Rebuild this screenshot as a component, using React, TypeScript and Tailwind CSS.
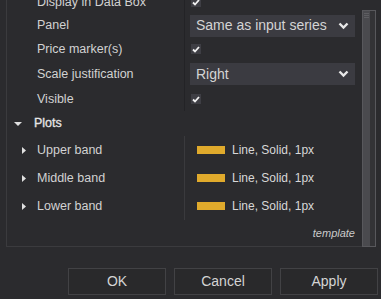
import { ReactNode } from "react";

function Check() {
  return (
    <div className="w-[10px] h-[10px] bg-[#3e3e44] flex items-center justify-center">
      <svg width="8" height="7" viewBox="0 0 8 7">
        <polyline points="1,3.5 3,5.5 7,1" fill="none" stroke="#f0f0f0" strokeWidth="1.8" />
      </svg>
    </div>
  );
}

function Select({ value }: { value: string }) {
  return (
    <div className="ml-[5px] w-[165px] h-[22px] bg-[#3b3b41] flex items-center justify-between pl-[6px] pr-[6px] text-[14px] text-[#d4d4d4]">
      <span>{value}</span>
      <svg width="11" height="8" viewBox="0 0 11 8">
        <polyline points="1.5,1.5 5.5,5.5 9.5,1.5" fill="none" stroke="#e8e8e8" strokeWidth="2.4" />
      </svg>
    </div>
  );
}

function Row({ label, h, children }: { label: string; h: string; children?: ReactNode }) {
  return (
    <div className={`flex ${h}`}>
      <div className="w-[178px] shrink-0 border-r border-[#232326] pl-[30px] flex items-center text-[12.5px] text-[#d2d2d2]">
        {label}
      </div>
      <div className="flex-1 flex items-center">{children}</div>
    </div>
  );
}

function PlotRow({ label }: { label: string }) {
  return (
    <div className="flex h-[28px]">
      <div className="w-[178px] shrink-0 border-r border-[#3a3a3d] flex items-center text-[12.5px] text-[#d2d2d2]">
        <svg width="4" height="7" viewBox="0 0 4 7" className="ml-[15px] mr-[11px]">
          <polygon points="0,0 4,3.5 0,7" fill="#e0e0e0" />
        </svg>
        {label}
      </div>
      <div className="flex-1 flex items-center pl-[12px] text-[12px] text-[#d8d8d8]">
        <div className="w-[28px] h-[8px] bg-[#e0aa2c] mr-[7px]" />
        Line, Solid, 1px
      </div>
    </div>
  );
}

export default function App() {
  return (
    <div className="w-[381px] h-[299px] bg-[#2b2b2e] overflow-hidden flex flex-col" style={{ fontFamily: '"Liberation Sans", Arial, sans-serif' }}>
      <div className="flex h-[247px] shrink-0">
        <div className="ml-[6px] w-[356px] border-l border-b border-[#3b3b3e] overflow-hidden flex flex-col">
          <div className="-mt-[10px]">
            <Row label="Display in Data Box" h="h-[24px]">
              <div className="ml-[6px]"><Check /></div>
            </Row>
            <Row label="Panel" h="h-[23px]">
              <Select value="Same as input series" />
            </Row>
            <Row label="Price marker(s)" h="h-[24px]">
              <div className="ml-[6px]"><Check /></div>
            </Row>
            <Row label="Scale justification" h="h-[26px]">
              <Select value="Right" />
            </Row>
            <Row label="Visible" h="h-[24px]">
              <div className="ml-[6px]"><Check /></div>
            </Row>
          </div>
          <div className="h-[25px] flex items-center text-[12.5px] text-[#e6e6e6]" style={{ WebkitTextStroke: "0.3px #e6e6e6" }}>
            <svg width="8" height="4" viewBox="0 0 8 4" className="ml-[7px] mr-[12px]">
              <polygon points="0,0 8,0 4,4" fill="#e0e0e0" />
            </svg>
            Plots
          </div>
          <PlotRow label="Upper band" />
          <PlotRow label="Middle band" />
          <PlotRow label="Lower band" />
          <div className="flex-1 flex items-center justify-end pr-[7px] pt-[1px] text-[11px] italic text-[#cacaca]">
            template
          </div>
        </div>
        <div className="mt-[10px] w-[14px] border border-[#58585c] bg-[#333336] flex">
          <div className="w-[7px] bg-[#4a4a4e] flex flex-col items-center pt-[2px] gap-[1px]">
            <div className="w-[5px] h-px bg-[#5e5e62]" />
            <div className="w-[5px] h-px bg-[#5e5e62]" />
            <div className="w-[5px] h-px bg-[#5e5e62]" />
          </div>
        </div>
      </div>
      <div className="mt-[21px] flex gap-[8px] pl-[68px]">
        {["OK", "Cancel", "Apply"].map((t) => (
          <div key={t} className="w-[98px] h-[27px] border border-[#424245] bg-[#29292b] flex items-center justify-center text-[14px] text-[#d4d4d4]">
            {t}
          </div>
        ))}
      </div>
    </div>
  );
}
